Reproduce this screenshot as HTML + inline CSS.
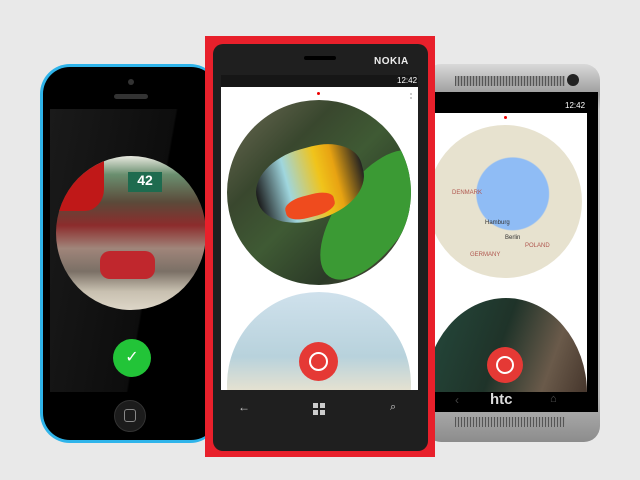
<!DOCTYPE html>
<html><head><style>
*{margin:0;padding:0;box-sizing:border-box}
body{width:640px;height:480px;background:#e9e9e9;position:relative;overflow:hidden;font-family:"Liberation Sans",sans-serif}
div{position:absolute}
.c{border-radius:50%;overflow:hidden}
</style></head><body>

<!-- iPhone -->
<div style="left:40px;top:64px;width:180px;height:379px;background:#2fb4ea;border-radius:30px"></div>
<div style="left:43px;top:67px;width:175px;height:373px;background:#000;border-radius:27px"></div>
<div style="left:128px;top:79px;width:6px;height:6px;border-radius:50%;background:#333"></div>
<div style="left:114px;top:94px;width:34px;height:5px;border-radius:3px;background:#333"></div>
<div style="left:50px;top:109px;width:160px;height:283px;overflow:hidden;background:linear-gradient(100deg,#1a1a1a 0%,#0d0d0d 60%,#000 61%)">
  <div class="c" style="left:6px;top:47px;width:150px;height:154px;background:linear-gradient(180deg,#e9e9e0 0%,#6a8f6f 12%,#5b4a3a 30%,#8c2c2c 45%,#a0857a 60%,#7b7066 75%,#c8c0b0 88%,#ddd6c8 100%)">
    <div style="left:0;top:0;width:48px;height:55px;background:#c01818;border-radius:0 0 40% 0"></div>
    <div style="left:72px;top:16px;width:34px;height:20px;background:#1e6b4f;color:#fff;font-size:14px;font-weight:bold;text-align:center">42</div>
    <div style="left:44px;top:95px;width:55px;height:28px;background:#c0272d;border-radius:10px"></div>
  </div>
  <div class="c" style="left:63px;top:230px;width:38px;height:38px;background:#22c438;color:#fff;text-align:center;line-height:38px;font-size:16px">✓</div>
</div>
<div class="c" style="left:114px;top:400px;width:32px;height:32px;background:#1c1c1c;border:1px solid #333"></div>
<div style="left:124px;top:409px;width:12px;height:13px;border:1.5px solid #888;border-radius:3px"></div>

<!-- HTC -->
<div style="left:425px;top:64px;width:175px;height:378px;background:linear-gradient(180deg,#d9d9d9,#9c9c9c 8%,#c8c8c8 12%,#b5b5b5 88%,#8c8c8c);border-radius:16px"></div>
<div style="left:455px;top:76px;width:110px;height:10px;background:repeating-linear-gradient(90deg,#555 0 1px,#999 1px 3px)"></div>
<div class="c" style="left:567px;top:74px;width:12px;height:12px;background:#222"></div>
<div style="left:435px;top:92px;width:163px;height:320px;background:#000"></div>
<div style="left:565px;top:101px;color:#fff;font-size:8px">12:42</div>
<div style="left:435px;top:113px;width:152px;height:279px;background:#fff;overflow:hidden">
  <div class="c" style="left:69px;top:3px;width:3px;height:3px;background:#e00"></div>
  <div class="c" style="left:-7px;top:12px;width:154px;height:153px;background:radial-gradient(circle at 55% 45%,#8fbcf5 0 30%,#e7e2cf 31%)"></div>
  <div style="left:17px;top:77px;font-size:6px;color:#b0574f">DENMARK</div>
  <div style="left:50px;top:107px;font-size:6px;color:#333">Hamburg</div>
  <div style="left:70px;top:122px;font-size:6px;color:#333">Berlin</div>
  <div style="left:90px;top:130px;font-size:6px;color:#b0574f">POLAND</div>
  <div style="left:35px;top:139px;font-size:6px;color:#b0574f">GERMANY</div>
  <div class="c" style="left:-10px;top:185px;width:162px;height:190px;background:linear-gradient(110deg,#254a3d,#1f3329 40%,#6a5a4a 65%,#2a1a15)"></div>
  <div class="c" style="left:52px;top:234px;width:36px;height:36px;background:#e53935"></div>
  <div class="c" style="left:61px;top:243px;width:18px;height:18px;border:2px solid #fff"></div>
</div>
<div style="left:435px;top:392px;width:152px;height:20px;background:#000"></div>
<div style="left:455px;top:393px;color:#444;font-size:12px">‹</div>
<div style="left:490px;top:391px;color:#ddd;font-size:15px;font-weight:bold">htc</div>
<div style="left:550px;top:393px;color:#555;font-size:11px">⌂</div>
<div style="left:455px;top:417px;width:110px;height:10px;background:repeating-linear-gradient(90deg,#555 0 1px,#999 1px 3px)"></div>

<!-- Nokia -->
<div style="left:205px;top:36px;width:230px;height:421px;background:#e8202b"></div>
<div style="left:213px;top:44px;width:215px;height:407px;background:#1f1f1f;border-radius:10px"></div>
<div style="left:304px;top:56px;width:32px;height:4px;border-radius:2px;background:#000"></div>
<div style="left:374px;top:56px;color:#eee;font-size:10px;font-weight:bold;letter-spacing:0.5px">NOKIA</div>
<div style="left:221px;top:75px;width:197px;height:12px;background:#161616"></div>
<div style="left:397px;top:76px;color:#fff;font-size:8px">12:42</div>
<div style="left:221px;top:87px;width:197px;height:303px;background:#fff;overflow:hidden">
  <div class="c" style="left:96px;top:5px;width:3px;height:3px;background:#e00"></div>
  <div style="left:189px;top:6px;width:2px;height:2px;background:#ccc;box-shadow:0 4px #ccc"></div>
  <div class="c" style="left:6px;top:13px;width:184px;height:185px;background:linear-gradient(135deg,#6d6b55 0%,#39472e 30%,#3f5a34 50%,#2b3a27 75%,#5a5040 100%)">
    <div style="left:110px;top:40px;width:70px;height:150px;border-radius:50%;background:#3b9a34;transform:rotate(35deg)"></div>
    <div style="left:28px;top:48px;width:110px;height:72px;border-radius:50% 40% 50% 45%;background:linear-gradient(90deg,#1a1a1a 0%,#9fd6de 30%,#f0c41b 60%,#e8a312 75%,#222 100%);transform:rotate(-15deg)"></div>
    <div style="left:58px;top:95px;width:50px;height:22px;border-radius:40%;background:#ef4b1e;transform:rotate(-15deg)"></div>
  </div>
  <div class="c" style="left:6px;top:205px;width:184px;height:185px;background:linear-gradient(180deg,#cfe1ec 0%,#b8d2dc 35%,#e9e3d0 55%,#7d8fa0 65%,#c9c9c9 75%)"></div>
  <div class="c" style="left:78px;top:255px;width:39px;height:39px;background:#e53935"></div>
  <div class="c" style="left:88px;top:265px;width:19px;height:19px;border:2px solid #fff"></div>
</div>
<div style="left:221px;top:390px;width:197px;height:54px;background:#1f1f1f"></div>
<div style="left:238px;top:400px;color:#ccc;font-size:12px">←</div>
<div style="left:313px;top:403px;width:12px;height:12px;background:linear-gradient(90deg,#ccc 5px,transparent 5px 7px,#ccc 7px),#1f1f1f;"></div>
<div style="left:313px;top:408px;width:12px;height:2px;background:#1f1f1f"></div>
<div style="left:390px;top:401px;color:#ccc;font-size:11px">⌕</div>
</body></html>
